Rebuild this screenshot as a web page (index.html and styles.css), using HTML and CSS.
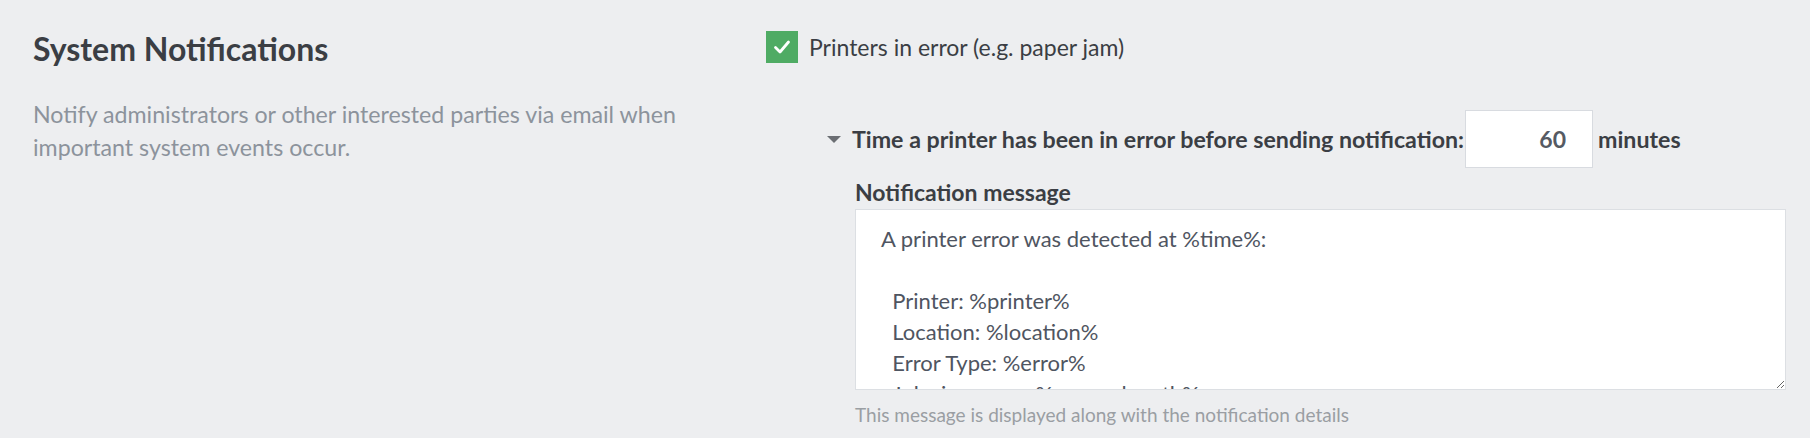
FILE: index.html
```html
<!DOCTYPE html>
<html lang="en">
<head>
    <meta charset="UTF-8">
    <meta name="viewport" content="width=device-width, initial-scale=1.0">
    <title>System Notifications</title>
    <link rel="stylesheet" href="styles.css">
</head>
<body>
    <div class="section">
        <div class="intro">
            <h2 class="intro-title">System Notifications</h2>
            <p class="intro-text">Notify administrators or other interested parties via email when important system events occur.</p>
        </div>

        <div class="settings">
            <label class="check">
                <span class="check-box">
                    <svg width="20" height="20" viewBox="0 0 20 20"><path d="M3.5 10.5 L8 15 L16.5 5" fill="none" stroke="#fff" stroke-width="2.8" stroke-linecap="round" stroke-linejoin="round"/></svg>
                </span>
                Printers in error (e.g. paper jam)
            </label>

            <div class="details">
                <div class="delay-row">
                    <span class="caret"></span>
                    <span class="delay-label">Time a printer has been in error before sending notification:</span>
                    <input class="delay-input" type="text" value="60">
                    <span class="delay-unit">minutes</span>
                </div>

                <div class="field">
                    <label class="field-label" for="message">Notification message</label>
                    <textarea class="field-text" id="message">A printer error was detected at %time%:

  Printer: %printer%
  Location: %location%
  Error Type: %error%
  Jobs in queue: %queue-length%</textarea>
                    <div class="field-help">This message is displayed along with the notification details</div>
                </div>
            </div>
        </div>
    </div>
</body>
</html>
```

FILE: styles.css
```css
body {
    margin: 0;
    background: #edeef0;
    font-family: 'Lato', sans-serif;
    color: #3b3e44;
}

.section {
    display: flex;
    padding: 0 24px 0 33px;
}

.intro {
    width: 733px;
    flex-shrink: 0;
}

.intro-title {
    margin: 30px 0 0;
    font-size: 32px;
    font-weight: 700;
    line-height: 38px;
    color: #3b3e44;
}

.intro-text {
    margin: 30px 0 0;
    width: 680px;
    font-size: 23.2px;
    line-height: 33px;
    color: #8c939c;
}

.settings {
    flex: 1;
    padding-top: 31px;
}

.check {
    display: flex;
    align-items: center;
    gap: 11px;
    font-size: 23px;
    color: #3b3e44;
}

.check-box {
    display: flex;
    align-items: center;
    justify-content: center;
    width: 32px;
    height: 32px;
    background: #4fab64;
}

.details {
    padding: 47px 0 0 61px;
}

.delay-row {
    display: flex;
    align-items: center;
}

.caret {
    width: 0;
    height: 0;
    border-left: 7px solid transparent;
    border-right: 7px solid transparent;
    border-top: 7px solid #6b6e73;
    margin-right: 11px;
}

.delay-label,
.delay-unit {
    font-size: 23.2px;
    font-weight: 700;
    color: #3b3e44;
}

.delay-input {
    width: 128px;
    height: 58px;
    box-sizing: border-box;
    margin: 0 5px 0 1px;
    padding: 0 26px 0 10px;
    border: 1px solid #d8dbe0;
    background: #fff;
    text-align: right;
    font-family: 'Lato', sans-serif;
    font-size: 23px;
    font-weight: 700;
    color: #555a63;
}

.field {
    padding-left: 28px;
    margin-top: 9px;
}

.field-label {
    display: block;
    font-size: 23px;
    font-weight: 700;
    line-height: 30px;
    color: #3b3e44;
}

.field-text {
    display: block;
    width: 100%;
    height: 181px;
    box-sizing: border-box;
    margin-top: 2px;
    padding: 13px 25px;
    border: 1px solid #dcdfe3;
    background: #fff;
    font-family: 'Lato', sans-serif;
    font-size: 22px;
    line-height: 31px;
    color: #4f5561;
    resize: vertical;
    overflow: hidden;
}

.field-help {
    margin-top: 13px;
    font-size: 19px;
    color: #9a9ea3;
}
```
